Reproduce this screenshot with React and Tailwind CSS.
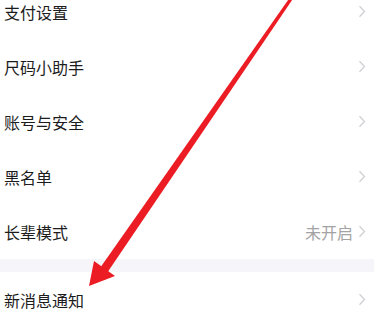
import React from "react";

const rows = [
	{ label: "支付设置" },
	{ label: "尺码小助手" },
	{ label: "账号与安全" },
	{ label: "黑名单" },
	{ label: "长辈模式", value: "未开启" },
];

function Chevron() {
	return (
		<svg width="8" height="13" viewBox="0 0 8 13" className="shrink-0">
			<path d="M1.5 1.2 L6.5 6.5 L1.5 11.8" fill="none" stroke="#d0d0d4" strokeWidth="1.3" />
		</svg>
	);
}

function Row({ label, value }) {
	return (
		<div className="h-[55px] flex items-center pl-[4px] pr-[8px] bg-white">
			<span className="flex-1 text-[16px] text-[#1c1c1c]">{label}</span>
			{value && <span className="text-[16px] text-[#a3a3a3] mr-[5px]">{value}</span>}
			<Chevron />
		</div>
	);
}

export default function App() {
	return (
		<div
			className="relative w-[374px] h-[315px] overflow-hidden bg-white"
			style={{ fontFamily: '"Noto Sans CJK SC", "Noto Sans", sans-serif' }}
		>
			<div className="-mt-[16px] flex flex-col">
				{rows.map((r) => (
					<Row key={r.label} {...r} />
				))}
				<div className="h-[13px] bg-[#f6f6fa]" />
				<Row label="新消息通知" />
			</div>

			{/* annotation arrow */}
			<svg className="absolute inset-0 pointer-events-none" width="374" height="315" viewBox="0 0 374 315">
				<polygon points="289.5,-2 293.5,-2 107,273 100,268" fill="#ec1c24" />
				<polygon points="89,286 94,261 115,276" fill="#ec1c24" />
			</svg>
		</div>
	);
}
